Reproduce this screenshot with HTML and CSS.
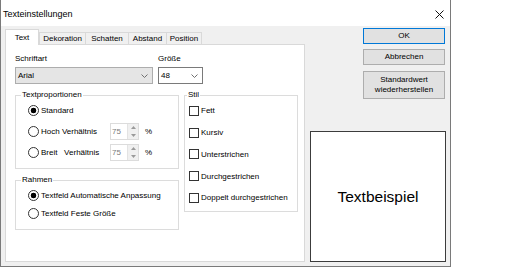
FILE: index.html
```html
<!DOCTYPE html>
<html lang="de">
<head>
    <meta charset="UTF-8">
    <title>Texteinstellungen</title>
    <link rel="stylesheet" href="styles.css">
</head>
<body>
    <div class="window">
        <div class="titlebar">
            <span class="title">Texteinstellungen</span>
            <svg class="close" width="9" height="9" viewBox="0 0 9 9">
                <path d="M0.5 0.5 L8.5 8.5 M8.5 0.5 L0.5 8.5" stroke="#111" stroke-width="1" fill="none"/>
            </svg>
        </div>
        <div class="client">
            <div class="tabctl">
                <div class="tabstrip">
                    <div class="tab active tab-text">Text</div>
                    <div class="tab tab-deko">Dekoration</div>
                    <div class="tab tab-schatten">Schatten</div>
                    <div class="tab tab-abstand">Abstand</div>
                    <div class="tab tab-position">Position</div>
                </div>
                <div class="tabpage">
                    <div class="fontrow">
                        <div class="field">
                            <div class="lbl">Schriftart</div>
                            <div class="combo combo-font">
                                <span>Arial</span>
                                <svg width="7" height="4" viewBox="0 0 7 4"><path d="M0.5 0.5 L3.5 3.5 L6.5 0.5" fill="none" stroke="#707070"/></svg>
                            </div>
                        </div>
                        <div class="field">
                            <div class="lbl">Größe</div>
                            <div class="combo combo-size">
                                <span>48</span>
                                <svg width="7" height="4" viewBox="0 0 7 4"><path d="M0.5 0.5 L3.5 3.5 L6.5 0.5" fill="none" stroke="#707070"/></svg>
                            </div>
                        </div>
                    </div>

                    <div class="groups">
                        <div class="groups-left">
                            <fieldset class="group group-prop">
                                <legend>Textproportionen</legend>
                                <div class="opt">
                                    <span class="radio on"></span>
                                    <span>Standard</span>
                                </div>
                                <div class="opt">
                                    <span class="radio"></span>
                                    <span class="optlabel">Hoch Verhältnis</span>
                                    <span class="spin">
                                        <span class="spin-val">75</span>
                                        <span class="spin-btns">
                                            <svg width="5" height="3" viewBox="0 0 5 3"><path d="M0 3 L2.5 0 L5 3 Z" fill="#9a9a9a"/></svg>
                                            <svg width="5" height="3" viewBox="0 0 5 3"><path d="M0 0 L2.5 3 L5 0 Z" fill="#9a9a9a"/></svg>
                                        </span>
                                    </span>
                                    <span class="pct">%</span>
                                </div>
                                <div class="opt">
                                    <span class="radio"></span>
                                    <span class="optlabel">Breit&nbsp;&nbsp; Verhältnis</span>
                                    <span class="spin">
                                        <span class="spin-val">75</span>
                                        <span class="spin-btns">
                                            <svg width="5" height="3" viewBox="0 0 5 3"><path d="M0 3 L2.5 0 L5 3 Z" fill="#9a9a9a"/></svg>
                                            <svg width="5" height="3" viewBox="0 0 5 3"><path d="M0 0 L2.5 3 L5 0 Z" fill="#9a9a9a"/></svg>
                                        </span>
                                    </span>
                                    <span class="pct">%</span>
                                </div>
                            </fieldset>

                            <fieldset class="group group-frame">
                                <legend>Rahmen</legend>
                                <div class="opt opt-short">
                                    <span class="radio on"></span>
                                    <span>Textfeld Automatische Anpassung</span>
                                </div>
                                <div class="opt opt-short">
                                    <span class="radio"></span>
                                    <span>Textfeld Feste Größe</span>
                                </div>
                            </fieldset>
                        </div>

                        <fieldset class="group group-style">
                            <legend>Stil</legend>
                            <div class="chk"><span class="box"></span><span>Fett</span></div>
                            <div class="chk"><span class="box"></span><span>Kursiv</span></div>
                            <div class="chk"><span class="box"></span><span>Unterstrichen</span></div>
                            <div class="chk"><span class="box"></span><span>Durchgestrichen</span></div>
                            <div class="chk"><span class="box"></span><span>Doppelt durchgestrichen</span></div>
                        </fieldset>
                    </div>
                </div>
            </div>

            <div class="side">
                <div class="btn btn-ok">OK</div>
                <div class="btn btn-cancel">Abbrechen</div>
                <div class="btn btn-reset">Standardwert<br>wiederherstellen</div>
                <div class="preview">Textbeispiel</div>
            </div>
        </div>
    </div>
</body>
</html>
```

FILE: styles.css
```css
body {
    margin: 0;
    background: #fff;
    font-family: "Liberation Sans", Arial, sans-serif;
    font-size: 8px;
    color: #000;
}

.window {
    width: 449px;
    height: 266px;
    border: 1px solid #7a7a7a;
    border-top: none;
    display: flex;
    flex-direction: column;
    background: #f0f0f0;
}

/* title bar */
.titlebar {
    height: 26px;
    box-sizing: border-box;
    background: #fff;
    display: flex;
    align-items: center;
    justify-content: space-between;
    padding: 2px 6px 0 2px;
    font-size: 9px;
}

.close {
    display: block;
}

.client {
    flex: 1;
    display: flex;
    gap: 5px;
    padding: 2px 4px 4px 4px;
}

/* tab control */
.tabctl {
    width: 300px;
    display: flex;
    flex-direction: column;
}

.tabstrip {
    height: 16px;
    display: flex;
    align-items: flex-end;
}

.tab {
    height: 12px;
    box-sizing: border-box;
    border: 1px solid #d9d9d9;
    border-bottom: none;
    border-left: none;
    background: #f0f0f0;
    display: flex;
    align-items: center;
    justify-content: center;
    line-height: 10px;
}

.tab.active {
    height: 16px;
    margin-bottom: -1px;
    background: #fff;
    border-left: 1px solid #d9d9d9;
    position: relative;
    z-index: 1;
}

.tab-text { width: 34px; }
.tab-deko { width: 47px; border-left: 1px solid #d9d9d9; }
.tab-schatten { width: 43px; }
.tab-abstand { width: 38px; }
.tab-position { width: 35px; }

.tabpage {
    flex: 1;
    background: #fff;
    border: 1px solid #d9d9d9;
    padding: 9px 0 0 9px;
}

/* font row */
.fontrow {
    display: flex;
    gap: 5px;
}

.lbl {
    height: 10px;
    line-height: 10px;
    margin-bottom: 3px;
}

.combo {
    height: 17px;
    box-sizing: border-box;
    border: 1px solid #7a7a7a;
    background: #fff;
    display: flex;
    align-items: center;
    justify-content: space-between;
    padding: 0 4px 0 2px;
}

.combo svg {
    display: block;
}

.combo-font {
    width: 138px;
    background: #e5e5e5;
    border-color: #adadad;
}

.combo-size {
    width: 45px;
}

/* group boxes */
.groups {
    display: flex;
    gap: 5px;
    margin-top: 6px;
}

.groups-left {
    display: flex;
    flex-direction: column;
    gap: 6px;
}

.group {
    margin: 0;
    padding: 0;
    border: 1px solid #dcdcdc;
    box-sizing: border-box;
    min-width: 0;
}

.group legend {
    line-height: 10px;
    height: 10px;
    padding: 0 1px;
    margin-left: 5px;
}

.group-prop {
    width: 164px;
    padding-bottom: 5px;
}

.group-frame {
    width: 164px;
    padding-top: 1px;
    padding-bottom: 7px;
}

.group-style {
    width: 114px;
    height: 122px;
    padding-left: 4px;
}

.group-style legend {
    margin-left: -2px;
}

.opt {
    height: 21px;
    display: flex;
    align-items: center;
    padding-left: 12px;
}

.opt-short {
    height: 18px;
}

.radio {
    width: 11px;
    height: 11px;
    box-sizing: border-box;
    border: 1px solid #333;
    border-radius: 50%;
    background: #fff;
    margin-right: 2px;
    flex: none;
}

.radio.on {
    background: radial-gradient(circle, #000 0 2.6px, #fff 3.1px);
}

.optlabel {
    width: 69px;
    white-space: pre;
}

.spin {
    width: 29px;
    height: 17px;
    box-sizing: border-box;
    border: 1px solid #dcdcdc;
    display: flex;
}

.spin-val {
    flex: 1;
    color: #7a7a7a;
    line-height: 15px;
    padding-left: 1px;
}

.spin-btns {
    width: 10px;
    background: #f0f0f0;
    border-left: 1px solid #e3e3e3;
    display: flex;
    flex-direction: column;
    align-items: center;
    justify-content: space-around;
}

.spin-btns svg {
    display: block;
}

.pct {
    margin-left: 6px;
}

.chk {
    height: 21.75px;
    display: flex;
    align-items: center;
}

.box {
    width: 10px;
    height: 10px;
    box-sizing: border-box;
    border: 1px solid #333;
    background: #fff;
    margin-right: 2px;
    flex: none;
}

/* right column */
.side {
    width: 136px;
    display: flex;
    flex-direction: column;
    align-items: flex-end;
}

.btn {
    width: 82px;
    height: 16px;
    margin-right: 1px;
    box-sizing: border-box;
    border: 1px solid #adadad;
    background: #e1e1e1;
    display: flex;
    align-items: center;
    justify-content: center;
    text-align: center;
    line-height: 10px;
}

.btn-ok {
    border-color: #0078d7;
}

.btn-cancel {
    margin-top: 5px;
}

.btn-reset {
    margin-top: 6px;
    height: 28px;
}

.preview {
    align-self: stretch;
    margin-top: auto;
    height: 131px;
    box-sizing: border-box;
    border: 1px solid #3c3c3c;
    background: #fff;
    display: flex;
    align-items: center;
    justify-content: center;
    font-size: 15.5px;
}
```
